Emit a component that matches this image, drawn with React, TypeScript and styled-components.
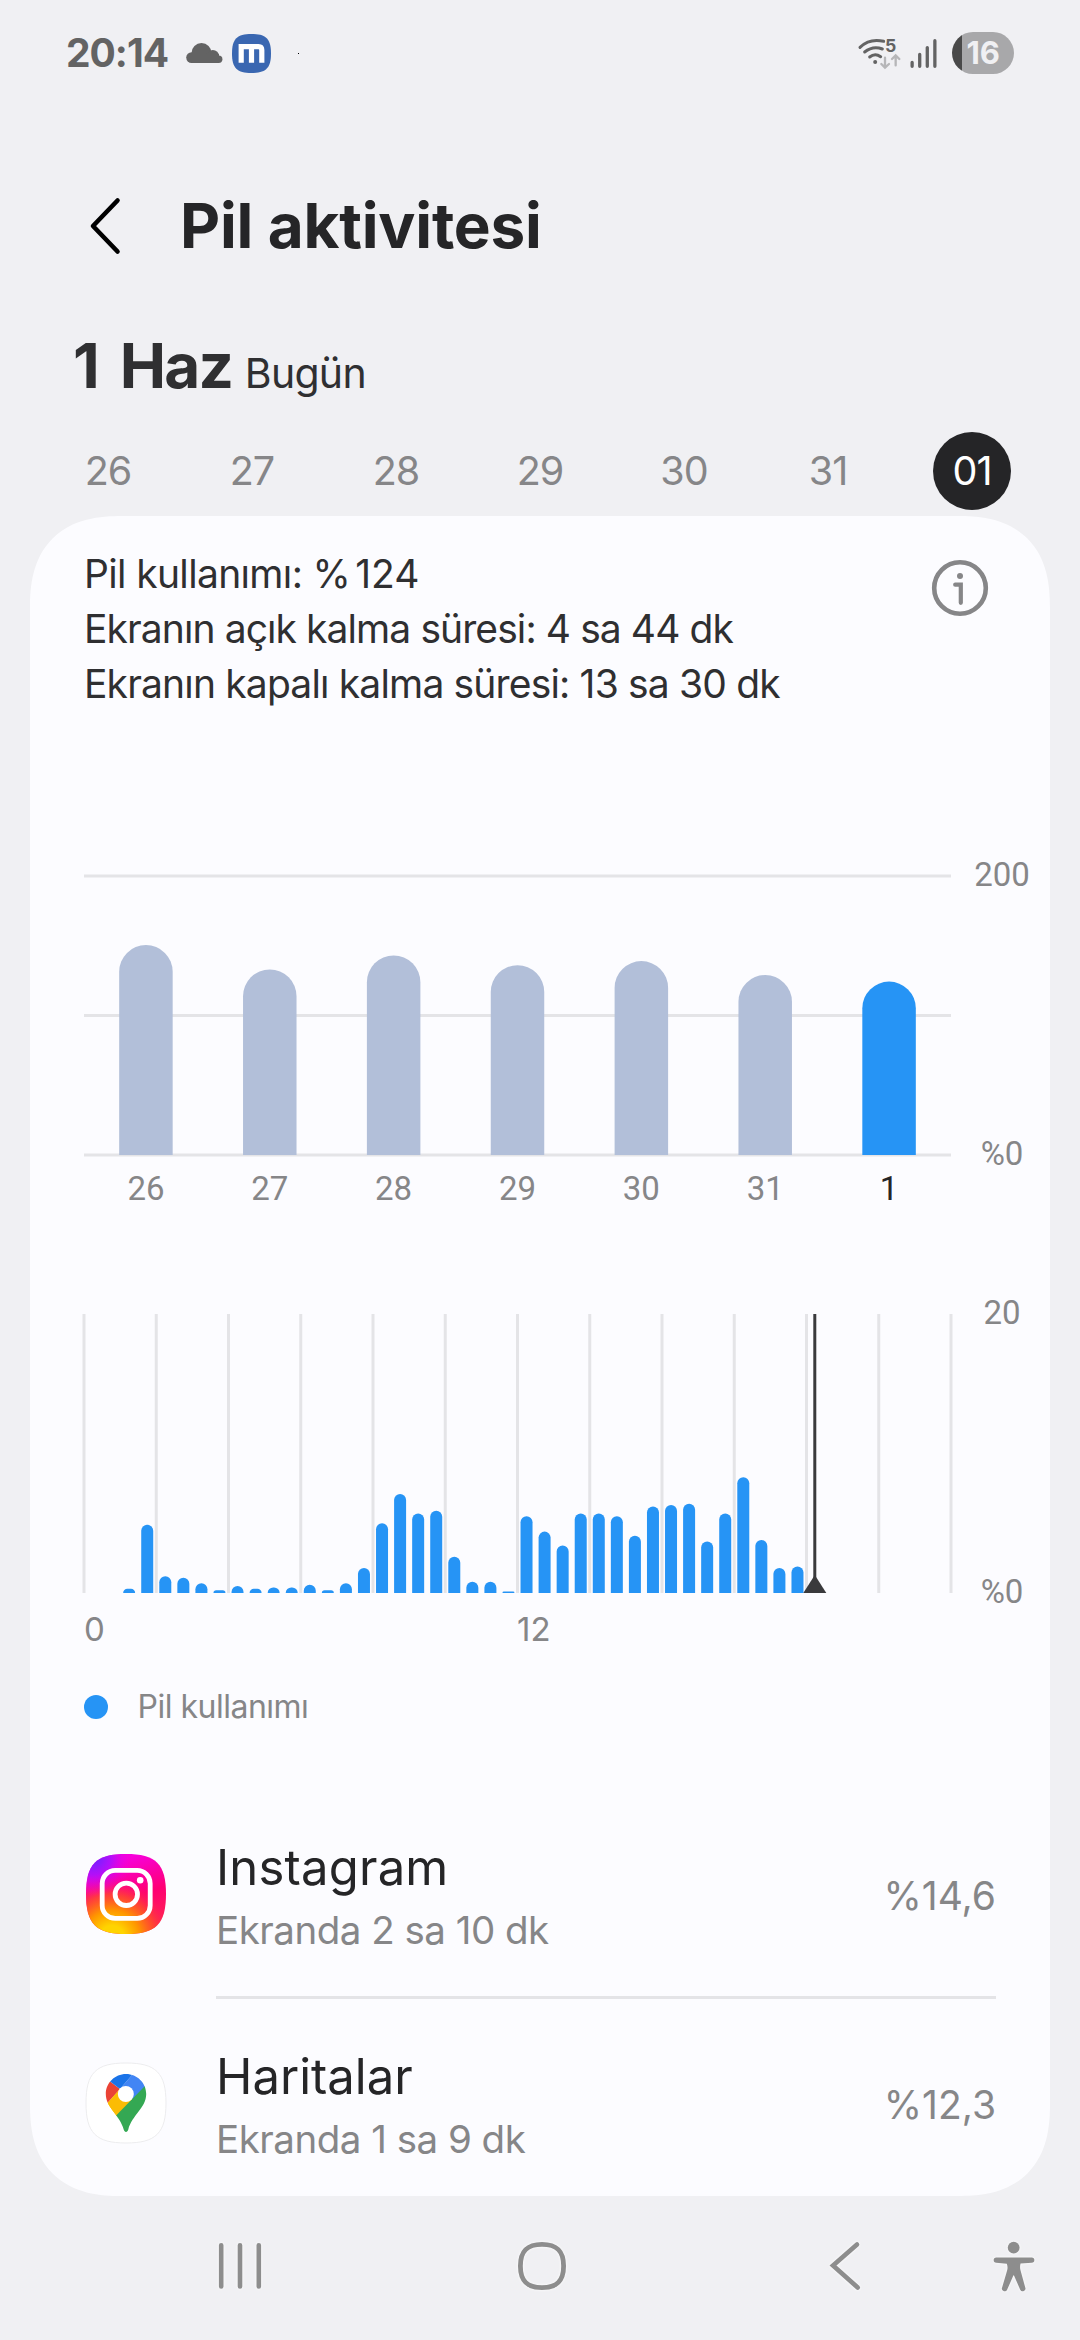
import React from 'react';
import styled, { createGlobalStyle } from 'styled-components';

const color = {
  page: '#f0f0f3',
  card: '#fcfcff',
  ink: '#252527',
  text: '#2f2f31',
  muted: '#868688',
  line: '#e4e4e7',
  bar: '#b2bfd9',
  accent: '#2694f5',
};

const GlobalStyle = createGlobalStyle`
  body {
    margin: 0;
    background: ${color.page};
    font-family: Inter, "Noto Sans", sans-serif;
  }
  svg { display: block; flex: none; overflow: visible; }
`;

const Screen = styled.div`
  width: 1080px;
  height: 2340px;
  display: flex;
  flex-direction: column;
  overflow: hidden;
  background: ${color.page};
`;

/* ---------- status bar ---------- */

const StatusBar = styled.header`
  height: 106px;
  flex: none;
  display: flex;
  justify-content: space-between;
  align-items: center;
  padding: 0 66px 0 66px;
`;

const StatusGroup = styled.div<{ $gap: number }>`
  display: flex;
  align-items: center;
  gap: ${p => p.$gap}px;
`;

const Clock = styled.span`
  font-size: 39px;
  font-weight: 700;
  letter-spacing: -1px;
  line-height: 48px;
  color: #636363;
  margin-right: 8px;
`;

const NotificationDot = styled.i`
  width: 1px;
  height: 1px;
  margin-left: 17px;
  background: #000;
`;

const Battery = styled.div`
  width: 62.5px;
  height: 42px;
  border-radius: 21px;
  margin-left: 6px;
  display: flex;
  align-items: center;
  overflow: hidden;
  background: linear-gradient(to right, #494949 10px, #a8a8aa 10px);
`;

const BatteryLevel = styled.span`
  padding-left: 15px;
  font-size: 31px;
  font-weight: 700;
  line-height: 42px;
  color: ${color.page};
`;

/* ---------- header ---------- */

const Header = styled.div`
  display: flex;
  align-items: center;
  height: 90px;
  flex: none;
  margin-top: 74.5px;
  padding-left: 90px;
  gap: 60px;
`;

const Title = styled.h1`
  margin: 0;
  font-size: 62px;
  font-weight: 700;
  line-height: 90px;
  letter-spacing: -0.2px;
  color: ${color.ink};
`;

const DateLine = styled.div`
  display: flex;
  align-items: baseline;
  flex: none;
  height: 80px;
  margin-top: 55px;
  padding-left: 73px;
  color: ${color.text};
  line-height: 80px;
`;

const DateText = styled.strong`
  font-size: 62px;
  font-weight: 700;
  letter-spacing: -1.8px;
  word-spacing: 9px;
`;

const DateNote = styled.span`
  margin-left: 12.5px;
  font-size: 41px;
  letter-spacing: -0.7px;
`;

const DayStrip = styled.nav`
  display: grid;
  grid-template-columns: repeat(7, 144px);
  justify-items: center;
  flex: none;
  height: 78px;
  margin: 26.5px 36px 6px;
`;

const Day = styled.span<{ $active?: boolean }>`
  width: 78px;
  height: 78px;
  border-radius: 50%;
  text-align: center;
  line-height: 79px;
  font-size: 39.5px;
  letter-spacing: -1px;
  color: ${p => (p.$active ? '#fff' : color.muted)};
  background: ${p => (p.$active ? color.ink : 'transparent')};
`;

/* ---------- card ---------- */

const Card = styled.main`
  box-sizing: border-box;
  height: 1680px;
  flex: none;
  margin: 0 30px;
  padding: 30px 0 0 54px;
  overflow: hidden;
  background: ${color.card};
  border-radius: 78px;
  @supports (corner-shape: superellipse(1.3)) {
    border-radius: 92px;
    corner-shape: superellipse(1.3);
  }
`;

const Summary = styled.section`
  display: flex;
  justify-content: space-between;
  align-items: flex-start;
  padding-right: 62px;
`;

const SummaryLine = styled.p<{ $tracking: number }>`
  margin: 0;
  font-size: 39px;
  line-height: 55px;
  letter-spacing: ${p => p.$tracking}px;
  white-space: nowrap;
  color: ${color.text};
`;

const SummaryValue = styled.span`
  margin-left: 5px;
  letter-spacing: 0;
`;

const InfoButton = styled.button`
  margin: 14px 0 0;
  padding: 0;
  border: 0;
  background: none;
`;

const Chart = styled.section<{ $top: number }>`
  display: grid;
  grid-template-columns: 867px 99px;
  margin-top: ${p => p.$top}px;
`;

const ValueAxis = styled.div`
  box-sizing: border-box;
  display: flex;
  flex-direction: column;
  justify-content: space-between;
  align-items: center;
  height: 319px;
  margin: -21px 0 -19px;
  padding-left: 3px;
  font: 33px/40px Roboto, sans-serif;
  color: ${color.muted};
`;

const DayAxis = styled.div`
  display: grid;
  grid-template-columns: repeat(7, 1fr);
  margin-top: 14px;
  text-align: center;
  font: 33px/40px Roboto, sans-serif;
  color: ${color.muted};
`;

const DayTick = styled.span<{ $active: boolean }>`
  color: ${p => (p.$active ? color.ink : 'inherit')};
`;

const HourAxis = styled.div`
  display: grid;
  grid-template-columns: 433px 1fr;
  margin-top: 16px;
  font-size: 33px;
  line-height: 40px;
  color: ${color.muted};
`;

const Legend = styled.div`
  display: flex;
  align-items: center;
  gap: 29.5px;
  margin-top: 38px;
  font-size: 32px;
  line-height: 40px;
  letter-spacing: -0.5px;
  color: ${color.muted};
`;

const LegendDot = styled.i`
  width: 24px;
  height: 24px;
  border-radius: 50%;
  background: ${color.accent};
`;

const AppList = styled.ul`
  list-style: none;
  margin: 63px 54px 0 0;
  padding: 0;
`;

const AppRow = styled.li`
  display: grid;
  grid-template-columns: 132px 1fr auto;
  align-items: center;
  height: 206px;
  & + &::before {
    content: '';
    grid-column: 2 / -1;
    height: 3px;
    background: ${color.line};
  }
  & + & {
    grid-template-rows: 3px 206px;
    height: 209px;
  }
`;

const AppIcon = styled.div`
  grid-column: 1;
  padding: 2px 0 0 2px;
`;

const AppText = styled.div`
  padding-top: 10px;
`;

const AppName = styled.div<{ $tracking: number }>`
  font-size: 49px;
  line-height: 64px;
  letter-spacing: ${p => p.$tracking}px;
  color: ${color.ink};
`;

const AppUsage = styled.div`
  font-size: 38.5px;
  line-height: 60px;
  letter-spacing: -0.5px;
  color: ${color.muted};
`;

const AppShare = styled.span`
  padding-top: 4px;
  font-size: 39px;
  color: ${color.muted};
`;

const NavBar = styled.footer`
  display: flex;
  align-items: center;
  flex: 1;
  padding: 0 0 4px 219px;
`;

const NavItem = styled.span<{ $before?: number }>`
  margin-left: ${p => p.$before ?? 0}px;
  filter: drop-shadow(0 0 1.5px #fff);
`;

/* ---------- icons ---------- */

const CloudIcon = () => (
  <svg width="37" height="22" viewBox="186 41 37 22" fill="#636363">
    <circle cx="191.6" cy="56.6" r="5.4" />
    <circle cx="201.5" cy="52" r="10" />
    <circle cx="212.8" cy="55.3" r="6.3" />
    <circle cx="218.7" cy="58.3" r="3.7" />
    <rect x="191" y="53" width="28" height="9" />
  </svg>
);

const MailAppIcon = () => (
  <svg width="39" height="39" viewBox="232 34 39 39">
    <path d="M251.500 34C266 34 271 39 271 53.500S266 73 251.500 73 232 68 232 53.500 237 34 251.500 34Z" fill="#3a67b1" />
    <path d="M241.200 62.700V46.600H258.500Q261.800 46.600 261.800 50V62.700M251.500 47V62.700" fill="none" stroke="#fff" strokeWidth="5.200" />
  </svg>
);

const WifiIcon = () => (
  <svg width="43" height="34" viewBox="171 108 129 102" fill="none" stroke="#636363" strokeWidth="9" strokeLinecap="round">
    <path d="M177 142Q206 114 248 124" />
    <path d="M191 156Q216 136 244 147" />
    <path d="M206 171Q222 158 239 170" />
    <circle cx="222.500" cy="186" r="6" fill="#636363" stroke="none" />
    <text x="252" y="157" fontSize="53" fontWeight="700" fill="#636363" stroke="none">5</text>
    <path d="M252 173V203M241 192L252 203L264 192M284 196V166M273 177L284 166L295 177" stroke="#b6b6b8" strokeWidth="7" />
  </svg>
);

const SignalIcon = () => (
  <svg width="27" height="29" viewBox="327 114 81 88" stroke="#636363" strokeWidth="10" strokeLinecap="round">
    <path d="M333 185V197M356 161V197M379 140V197M402 119V197" />
  </svg>
);

const BackIcon = () => (
  <svg width="30" height="56" viewBox="0 0 30 56" fill="none" stroke="#000" strokeWidth="4.600" strokeLinecap="round" strokeLinejoin="round">
    <path d="M27.500 2.500L3 28L27.500 53.500" />
  </svg>
);

const InfoIcon = () => (
  <svg width="56" height="56" viewBox="0 0 56 56" fill="none" stroke={color.muted}>
    <circle cx="28" cy="28" r="25.800" strokeWidth="4.600" />
    <circle cx="28" cy="16" r="3" fill={color.muted} stroke="none" />
    <path d="M23.200 24.700H28.800V42.800" strokeWidth="4.200" strokeLinecap="round" />
  </svg>
);

const SQUIRCLE = 'M40 0C70 0 80 10 80 40S70 80 40 80 0 70 0 40 10 0 40 0Z';

const InstagramIcon = () => (
  <svg width="80" height="80" viewBox="0 0 80 80">
    <defs>
      <linearGradient id="igBase" x1="0.350" y1="0" x2="0.650" y2="1">
        <stop offset="0.080" stopColor="#f700dc" />
        <stop offset="0.550" stopColor="#ff0073" />
        <stop offset="1" stopColor="#ff2a4c" />
      </linearGradient>
      <radialGradient id="igWarm" gradientUnits="userSpaceOnUse" cx="26" cy="84" r="62">
        <stop offset="0.200" stopColor="#ffd400" />
        <stop offset="0.450" stopColor="#ff9500" />
        <stop offset="0.700" stopColor="#ff4b2b" stopOpacity="0.800" />
        <stop offset="1" stopColor="#ff0073" stopOpacity="0" />
      </radialGradient>
      <radialGradient id="igCool" gradientUnits="userSpaceOnUse" cx="8" cy="4" r="38">
        <stop offset="0.100" stopColor="#7a1fff" />
        <stop offset="0.450" stopColor="#a812ff" stopOpacity="0.850" />
        <stop offset="1" stopColor="#f700dc" stopOpacity="0" />
      </radialGradient>
    </defs>
    <path d={SQUIRCLE} fill="url(#igBase)" />
    <path d={SQUIRCLE} fill="url(#igWarm)" />
    <path d={SQUIRCLE} fill="url(#igCool)" />
    <g fill="none" stroke="#fff" strokeWidth="4.800">
      <rect x="16.200" y="16.400" width="48" height="48" rx="13" />
      <circle cx="40.300" cy="40.300" r="11.200" />
    </g>
    <circle cx="54.200" cy="26.200" r="3.300" fill="#fff" />
  </svg>
);

const MapsIcon = () => (
  <svg width="80" height="80" viewBox="0 0 80 80">
    <defs>
      <clipPath id="pin">
        <path d="M40 11C51.200 11 60.200 20 60.200 31C60.200 45 46 52 42.300 66.500C41.500 69.800 38.500 69.800 37.700 66.500C34 52 19.800 45 19.800 31C19.800 20 28.800 11 40 11Z" />
      </clipPath>
    </defs>
    <path d={SQUIRCLE} fill="#fff" stroke="#ececee" strokeWidth="1" />
    <g clipPath="url(#pin)">
      <path d="M10 53L34 26L50 36L24 59Z" fill="#fbbc04" />
      <path d="M24.400 18.700L34 26L9 54V18Z" fill="#ea4335" />
      <path d="M21.300 40.300L34 26L50 36L30.600 53L22 60L14 50Z" fill="#fbbc04" />
      <path d="M46 12L34 26L48 37L72 11L60 0Z" fill="#4285f4" />
      <path d="M24.400 18.700L34 26L46 12L55 2L10 2L18 13Z" fill="#1a73e8" />
      <path d="M24 58.700L30.600 52L58.200 23.700L72 10V76H24Z" fill="#34a853" />
    </g>
    <circle cx="39.800" cy="31" r="8" fill="#fff" />
  </svg>
);

const RecentsIcon = () => (
  <svg width="42" height="46" viewBox="0 0 42 46" stroke="#8d8d8d" strokeWidth="4.600" strokeLinecap="round">
    <path d="M2.200 2.300V43.500M21 2.300V43.500M39.800 2.300V43.500" />
  </svg>
);

const HomeIcon = () => (
  <svg width="48" height="48" viewBox="0 0 48 48" fill="none" stroke="#8d8d8d" strokeWidth="4.800">
    <path d="M24 2.400C39 2.400 45.600 9 45.600 24S39 45.600 24 45.600 2.400 39 2.400 24 9 2.400 24 2.400Z" />
  </svg>
);

const NavBackIcon = () => (
  <svg width="30" height="48" viewBox="0 0 30 48" fill="none" stroke="#8d8d8d" strokeWidth="4.600" strokeLinecap="round" strokeLinejoin="miter">
    <path d="M27 2.500L3 23.500L27.700 45.500" />
  </svg>
);

const AccessibilityIcon = () => (
  <svg width="42" height="51" viewBox="578 1208 128 153" fill="#8d8d8d">
    <circle cx="641" cy="1227" r="18" />
    <path d="M588 1257H696a8 8 0 0 1 0 16L662 1275Q659 1286 662 1297L676 1348a8 8 0 0 1-15 7L643 1314Q641 1308 639 1314L621 1355a8 8 0 0 1-15-7L621 1297Q624 1286 620 1276L588 1273a8 8 0 0 1 0-16Z" />
  </svg>
);

/* ---------- charts ---------- */

const PLOT_W = 867;
const PLOT_H = 279;

const days = [
  { label: '26', value: 150.5 },
  { label: '27', value: 133 },
  { label: '28', value: 143 },
  { label: '29', value: 136 },
  { label: '30', value: 139 },
  { label: '31', value: 129 },
  { label: '1', value: 124.3 },
];

const halfHours = [
  0, 0, 0.3, 4.9, 1.2, 1.1, 0.7, 0.2, 0.5, 0.3, 0.4, 0.4, 0.6, 0.2, 0.7, 1.8,
  5, 7.1, 5.7, 5.9, 2.6, 0.8, 0.8, 0.1, 5.5, 4.4, 3.4, 5.7, 5.7, 5.5, 4.1, 6.2,
  6.3, 6.4, 3.7, 5.7, 8.3, 3.8, 1.8, 1.9,
];

function barPath(cx: number, w: number, h: number) {
  const rx = h < w / 2 ? Math.min(w / 2, h) : w / 2;
  const ry = Math.min(w / 2, h);
  const l = cx - w / 2;
  const r = cx + w / 2;
  const top = PLOT_H - h;
  return `M${l} ${PLOT_H}V${top + ry}A${rx} ${ry} 0 0 1 ${l + rx} ${top}H${r - rx}A${rx} ${ry} 0 0 1 ${r} ${top + ry}V${PLOT_H}Z`;
}

const DailyPlot = () => {
  const step = PLOT_W / days.length;
  return (
    <svg width={PLOT_W} height={PLOT_H}>
      {[0, 0.5, 1].map(f => (
        <line key={f} x1="0" x2={PLOT_W} y1={f * PLOT_H} y2={f * PLOT_H} stroke={color.line} strokeWidth="3" />
      ))}
      {days.map((d, i) => (
        <path
          key={d.label}
          d={barPath((i + 0.5) * step, 53.5, (d.value / 200) * PLOT_H)}
          fill={i === days.length - 1 ? color.accent : color.bar}
        />
      ))}
    </svg>
  );
};

const HourlyPlot = () => {
  const slot = PLOT_W / 48;
  const now = 730.8;
  return (
    <svg width={PLOT_W} height={PLOT_H}>
      {Array.from({ length: 13 }, (_, i) => (
        <line key={i} x1={(i * PLOT_W) / 12} x2={(i * PLOT_W) / 12} y1="0" y2={PLOT_H} stroke={color.line} strokeWidth="3" />
      ))}
      {halfHours.map((v, i) =>
        v > 0 ? <path key={i} d={barPath((i + 0.5) * slot, 12, (v / 20) * PLOT_H)} fill={color.accent} /> : null,
      )}
      <line x1={now} x2={now} y1="0" y2={PLOT_H - 2} stroke="#3a3a3c" strokeWidth="3" />
      <path d={`M${now} ${PLOT_H - 18}L${now + 11.5} ${PLOT_H}H${now - 11.5}Z`} fill="#3a3a3c" />
    </svg>
  );
};

/* ---------- screen ---------- */

const strip = ['26', '27', '28', '29', '30', '31', '01'];

const apps = [
  { name: 'Instagram', tracking: 0.2, usage: 'Ekranda 2 sa 10 dk', share: '%14,6', icon: <InstagramIcon /> },
  { name: 'Haritalar', tracking: 0, usage: 'Ekranda 1 sa 9 dk', share: '%12,3', icon: <MapsIcon /> },
];

export default function App() {
  return (
    <>
      <GlobalStyle />
      <Screen>
        <StatusBar>
          <StatusGroup $gap={9.5}>
            <Clock>20:14</Clock>
            <CloudIcon />
            <MailAppIcon />
            <NotificationDot />
          </StatusGroup>
          <StatusGroup $gap={9}>
            <WifiIcon />
            <SignalIcon />
            <Battery>
              <BatteryLevel>16</BatteryLevel>
            </Battery>
          </StatusGroup>
        </StatusBar>

        <Header>
          <BackIcon />
          <Title>Pil aktivitesi</Title>
        </Header>

        <DateLine>
          <DateText>1 Haz</DateText>
          <DateNote>Bugün</DateNote>
        </DateLine>

        <DayStrip>
          {strip.map((d, i) => (
            <Day key={d} $active={i === strip.length - 1}>{d}</Day>
          ))}
        </DayStrip>

        <Card>
          <Summary>
            <div>
              <SummaryLine $tracking={-0.65}>
                Pil kullanımı: %<SummaryValue>124</SummaryValue>
              </SummaryLine>
              <SummaryLine $tracking={-0.91}>Ekranın açık kalma süresi: 4 sa 44 dk</SummaryLine>
              <SummaryLine $tracking={-0.83}>Ekranın kapalı kalma süresi: 13 sa 30 dk</SummaryLine>
            </div>
            <InfoButton aria-label="Bilgi">
              <InfoIcon />
            </InfoButton>
          </Summary>

          <Chart $top={165}>
            <DailyPlot />
            <ValueAxis>
              <span>200</span>
              <span>%0</span>
            </ValueAxis>
            <DayAxis>
              {days.map((d, i) => (
                <DayTick key={d.label} $active={i === days.length - 1}>{d.label}</DayTick>
              ))}
            </DayAxis>
          </Chart>

          <Chart $top={105}>
            <HourlyPlot />
            <ValueAxis>
              <span>20</span>
              <span>%0</span>
            </ValueAxis>
            <HourAxis>
              <span>0</span>
              <span>12</span>
            </HourAxis>
          </Chart>

          <Legend>
            <LegendDot />
            Pil kullanımı
          </Legend>

          <AppList>
            {apps.map(a => (
              <AppRow key={a.name}>
                <AppIcon>{a.icon}</AppIcon>
                <AppText>
                  <AppName $tracking={a.tracking}>{a.name}</AppName>
                  <AppUsage>{a.usage}</AppUsage>
                </AppText>
                <AppShare>{a.share}</AppShare>
              </AppRow>
            ))}
          </AppList>
        </Card>

        <NavBar>
          <NavItem><RecentsIcon /></NavItem>
          <NavItem $before={257}><HomeIcon /></NavItem>
          <NavItem $before={264}><NavBackIcon /></NavItem>
          <NavItem $before={133}><AccessibilityIcon /></NavItem>
        </NavBar>
      </Screen>
    </>
  );
}
